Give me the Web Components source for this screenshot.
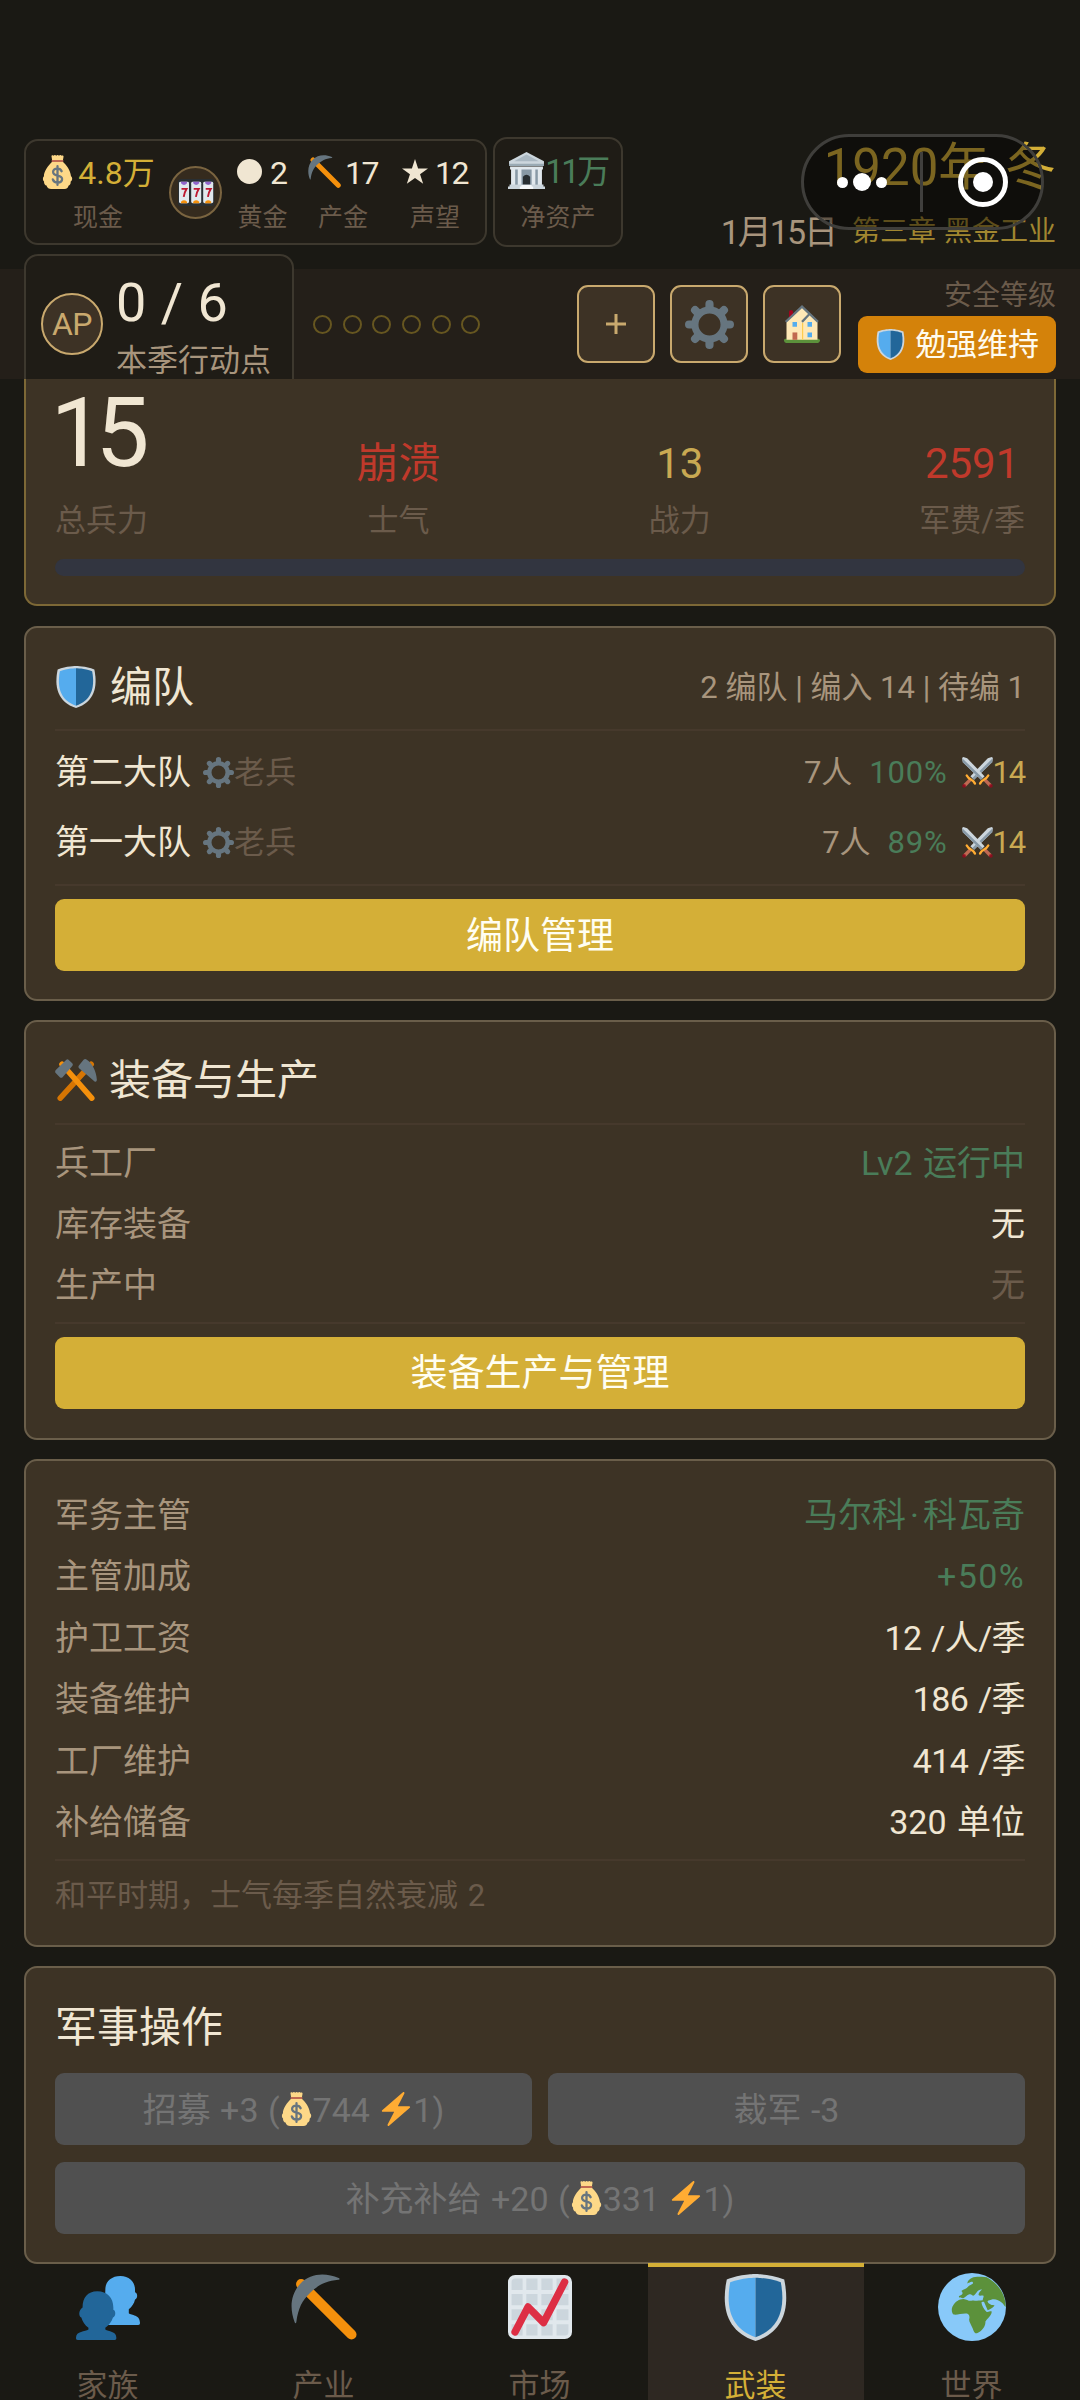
<!DOCTYPE html>
<html lang="zh-CN">
<head>
<meta charset="utf-8">
<title>军务</title>
<style>
html,body{margin:0;padding:0;background:#1a1914}
body{width:1080px;height:2400px;overflow:hidden;font-family:Roboto,"Noto Sans CJK SC",sans-serif;font-weight:400;word-spacing:2px;color:#f0e6d2;
--dim:#6b5b4b;--mid:#a8957d;--gold:#d4af37;--brass:#c9a96e;--green:#4a7c59;--red:#c0392b;--cream:#f0e6d2}
</style>
</head>
<body>
<game-app></game-app>
<script>
const REEL=`<rect x="1" y="7" width="10" height="22" rx="1.500" fill="#E1E8ED"/><path fill="#9266CC" d="M3 7h6v1.500q-3 3.500-6 0z"/><path fill="#F4900C" d="M3 29v-1.500q3-3 6 0V29z"/><path d="M3.500 14.300h5Q6.200 18 5.700 22.500" fill="none" stroke="#BE1931" stroke-width="1.900"/>`;
const SWORD=`<path fill="#CCD6DD" d="M34.500 0L36 1.200 35 6 14 26.500 9.800 22.300 30 1.500z"/><path fill="#8899A6" d="M36 1.200L35 6 14 26.500 12 24.300z"/><path d="M3 33L10 26" stroke="#BF6952" stroke-width="4"/><path d="M5.500 21.500q2 3.500 4.800 4.600 3.500 1.600 4.700 4.700" fill="none" stroke="#FFAC33" stroke-width="2.800" stroke-linecap="round"/><circle cx="2.500" cy="33.500" r="2.200" fill="#A0041E" fill-opacity=".75"/>`;
const ICONS={
shield:`<path fill="#CCD6DD" d="M33 3c-7-3-15-3-15-3S10 0 3 3C0 18 3 31 18 36c15-5 18-18 15-33z"/><path fill="#55ACEE" d="M18 34C6.4 29.7 2 19.8 4.8 4.4 11 2 17.900 2 18 2z"/><path fill="#269" d="M31.200 4.400C24.900 2 18 2 18 2v32C29.600 29.700 34 19.800 31.200 4.400z"/>`,
gear:`<g stroke="#66757F" fill="none"><circle cx="18" cy="18" r="10.700" stroke-width="5.200"/><g stroke-width="6" stroke-linecap="round"><path d="M18 3v3M18 30v3M3 18h3M30 18h3M7.400 7.400l2 2M26.600 26.600l2 2M28.600 7.400l-2 2M9.400 26.600l-2 2"/></g></g>`,
bolt:`<path fill="#FFAC33" d="M32.938 15.651C32.792 15.260 32.418 15 32 15H19.925L26.890 1.458c.219-.426.106-.947-.271-1.243C26.437.071 26.218 0 26 0c-.233 0-.466.082-.653.243L18 6.588 3.347 19.243c-.316.273-.430.714-.284 1.105S3.582 21 4 21h12.075L9.110 34.542c-.219.426-.106.947.271 1.243.182.144.401.215.619.215.233 0 .466-.082.653-.243L18 29.412l14.653-12.655c.317-.273.430-.714.285-1.106z"/>`,
bag:`<path fill="#FDD888" d="M12.500 7C8 11 3 17.500 3.200 22.500 1.500 24 1.800 27 3.300 28 3 30.500 4.500 32 6 32.300 6.500 35 9 36 11 36h14.500c3 0 4-1.700 4.500-3.400 2-.800 2.600-2.600 2.300-4.300 2.200-1.500 2.400-4 .400-6C32.200 16.500 28 11 23.500 7z"/><path fill="#FDD888" d="M11.500 1.600C11 .300 12.500 0 13.600.700c1-.900 2.200-.900 3 0 1-.900 2.200-.900 3 0 1-.900 2.300-.800 2.900.100 1.300-.700 2.500.100 2 1.500L23.800 6H12.200z"/><rect x="11.500" y="5.200" width="13" height="2.200" rx="1" fill="#BF6952"/><path d="M22.500 17.200c-.700-2-2.500-2.800-4.600-2.800-2.800 0-4.700 1.400-4.700 3.700 0 5.300 9.800 2.400 9.800 7.400 0 2.300-2.200 3.700-4.900 3.700-2.800 0-4.600-1.300-5.200-3.300M18 11.800v19.800" fill="none" stroke="#67757F" stroke-width="2.500" stroke-linecap="round"/>`,
pick:`<path d="M5.500 5.500L33 33" stroke="#F4900C" stroke-width="5.500" stroke-linecap="round"/><path fill="#66757F" d="M26 2.200C19-.800 10.500-.600 5.200 5.200-.400 11-.800 19 2 26.300c.300.800.800.700.900-.100C4 18.500 6 14.500 10.500 10.200 14.800 6 19 4 25.800 3.200c.900-.100 1-.600.200-1z"/>`,
people:`<path fill="#55ACEE" d="M16.500 8C16.500 3.500 20 .500 25 .500S33.200 3.800 33.200 8v1.500c1.600.300 1.600 3.500 0 4C32.800 15.500 31.500 17.500 29.700 19v2.200c1.500 1.400 6.300.500 6.300 5.300 0 1-.300 1.200-1 1.200H16z"/><path fill="#269" d="M3.700 18C3.700 12.500 6.500 9 12 9s9 3.500 9 9v1.200c1.600.500 1.400 3.900-.200 4.300-.800 2.200-2 4.200-4.300 5.700v1c1.700 1.300 6.200.700 6.200 4.600 0 1-.2 1.200-1 1.200H1c-.8 0-1-.3-1-1.200 0-3.900 5.200-3.300 7-4.600v-1c-2-1.400-3.300-3.500-4-5.700-1.500-.400-1.800-3.800.7-5.500z"/>`,
chart:`<rect width="36" height="36" rx="4" fill="#E1E8ED"/><g fill="#CCD6DD"><path d="M2 4q0-2 2-2h4.200v6.500H2zM10.300 2h6.300v6.500h-6.300zM18.800 2h6.300v6.500h-6.300zM27.300 2H32q2 0 2 2v4.500h-6.700zM2 10.700h6.200v6.300H2zM10.300 10.700h6.300v6.300h-6.300zM18.800 10.700h6.300v6.300h-6.300zM27.300 10.700H34v6.300h-6.700zM2 19.200h6.200v6.300H2zM10.300 19.200h6.300v6.300h-6.300zM18.800 19.200h6.300v6.300h-6.300zM27.300 19.200H34v6.300h-6.700zM2 27.700h6.200V34H4q-2 0-2-2zM10.300 27.700h6.300V34h-6.300zM18.800 27.700h6.300V34h-6.300zM27.300 27.700H34V32q0 2-2 2h-4.700z"/></g><path d="M4 32L11.300 18 20 26.800 31.800 4" fill="none" stroke="#DD2E44" stroke-width="4.200" stroke-linecap="round" stroke-linejoin="round"/>`,
globe:`<circle cx="18" cy="18" r="18" fill="#88C9F9"/><path fill="#5C913B" d="M15.500 5.500c.300-2 2.500-3.600 5.500-3.500 1.500 0 3.300-.300 4.800.300C32 5.500 36 11.800 35.800 18c-.800-.600-1.200-1.700-2.100-2.400-1.300-1.300-3.400-2-4.800-1.700-1 .6-2.200.3-2.700 1.100.3 1.500 2.500 2.300 3.700 2-.3 1.300-2 2.100-3.600 2.700l-1.900-4.400c-.7-.2-1.300-.1-1.400.3.2 1.700 1.400 3.800 2.800 5 1 .2 2.100-.6 2.600-.2.200 2-2.400 3.600-3.300 5.300.3 3.300-3 5.800-4.500 6.200-1.500.4-1.800-1.800-2.600-3.300-.5-1.500-1.700-2.700-1.500-4.200.5-1.700-.2-2.600-1.200-2.900-2.300-.3-5 .8-7 .5-1-.7-1.500-3-.3-4.800 1-2 3.200-3.500 5.500-3.500 2 .1 2.700 1.500 4.700.9 2 .2 3.500-.1 5.500-.2 0-1 .6-1.500.4-2.400-.9-.3-2 .3-2.600-.3-.2-1 .8-2 1.800-2.900-.8-.4-2 .3-2.500 1-1 1.200-1.700 2.700-2.700 2-1-1-1.800-.3-2.600 0-1 .7-1.700 1.900-2.700 1.400-1 0-2.200-.2-1.600-1 .8-.5 1.500-.5 1.800-1.400 0-1-.7-.8-.5-1.400 1-.9 2.700-1 3.500-2.300.9-.8 1.700-.700 2.500-1.500.3-1-.8-1.200-2-.5-1 0-.9-.5.500-.4z"/>`,
house:`<path fill="#5C913B" d="M36 33.500c0 1.400-1 2.500-2.500 2.500h-31C1 36 0 35 0 33.500S1 32 2.500 32h31c1.500 0 2.500.5 2.500 1.500z"/><path fill="#A0041E" d="M5 6c0-1.500 4-1.500 4 0v7H5z"/><path fill="#FFE8B6" d="M18 1L2.500 15V33h31V15z"/><path fill="#FFCC4D" d="M18 17h1.200v16H18z"/><path d="M1.700 16L18 1.500 34 16M18 16l7-7" fill="none" stroke="#66757F" stroke-width="2.200"/><path fill="#C1694F" d="M8.500 26h4.800v7H8.500z"/><path fill="#55ACEE" d="M8.500 16h4.500v4.500H8.500zM23.500 16H28v4.500h-4.500zM23.500 26H28v4.500h-4.500z"/>`,
slots:`<rect y="4" width="36" height="28" rx="3" fill="#292F33"/>${REEL}<g transform="translate(12.200 0)">${REEL}</g><g transform="translate(24.200 0)">${REEL}</g>`,
bank:`<path fill="#CCD6DD" d="M18 0L1 9v3.500h34V9z"/><path fill="#AAB8C2" d="M18 2.500L6 9h24z"/><path fill="#9AAAB4" d="M1 11.500h34v2H1z"/><path fill="#8899A6" d="M3.500 15h29v17h-29z"/><path fill="#292F33" d="M14.500 32v-8q3.500-3.500 7 0v8z"/><path fill="#E1E8ED" d="M3 14h4v18H3zM9.500 14h3.600v18H9.500zM23 14h3.600v18H23zM29 14h4v18h-4zM2 14h32v3H2z"/><path fill="#CCD6DD" d="M1.500 31.500h33V34h-33zM0 33.500h36V36H0z"/><path fill="#F5F8FA" d="M13 32h10v1.500h1.500V36h-13v-2.500H13z"/>`,
swords:`${SWORD}<g transform="matrix(-1 0 0 1 36 0)">${SWORD}</g>`,
tools:`<path d="M31 4.500L4.500 33.500" stroke="#D67503" stroke-width="4.800" stroke-linecap="round"/><path fill="#66757F" d="M20.500 5.500L24.500.7q1.300-1.300 2.800 0C32 4 35.500 10.500 35.900 18q-.3 2-2 1.200C29.500 15.500 25 11.500 20.600 8q-1-1.200-.1-2.500z"/><path d="M6 4.500L31.500 33.500" stroke="#F4900C" stroke-width="4.800" stroke-linecap="round"/><path fill="#66757F" d="M.7 9.500L9.500.8q1.200-1 2.300 0l3 2.800q1 1.200 0 2.400L6.500 15.600q-1.200 1.100-2.400 0L.6 12q-1-1.200.1-2.500z"/>`,
disc:`<circle cx="18" cy="18" r="18" fill="#f0e6d2"/>`,
star:`<path fill="#f0e6d2" d="M18 0l4.300 13.500H36L25 21.800 29.300 35.500 18 27.200 6.700 35.500 11 21.800 0 13.500h13.700z"/>`
};
// Registers an element whose shadow root is filled from an HTML builder.
function define(name,css,build){
  customElements.define(name,class extends HTMLElement{
    constructor(){
      super();
      const t=document.createElement('template');
      t.innerHTML=`<style>*{box-sizing:border-box}${css}</style>${build(k=>this.getAttribute(k)||'')}`;
      this.attachShadow({mode:'open'}).append(t.content.cloneNode(true));
    }
  });
}
define('g-icon',`:host{display:inline-block;flex:none}svg{display:block}`,
  a=>`<svg width="${a('w')}" height="${a('h')||a('w')}" viewBox="0 0 36 36" preserveAspectRatio="none">${ICONS[a('name')]}</svg>`);
define('res-item',`:host{display:flex;flex-direction:column;align-items:center;flex:none;white-space:nowrap}
.v{display:flex;align-items:center;height:44px;line-height:44px;font-size:32px;padding-top:3px}::slotted(g-icon){margin-bottom:2px}.l{font-size:25px;line-height:36px;margin-top:7px;color:var(--dim)}`,
  a=>`<div class="v"><slot></slot></div><div class="l"><slot name="label"></slot></div>`);
define('stat-box',`:host{display:flex;border:2px solid #3d382e;border-radius:14px;background:#1f1c16;flex:none}`,()=>`<slot></slot>`);
define('slot-button',`:host{display:flex;align-items:center;justify-content:center;flex:none;width:53px;height:53px;border:2px solid #7a6440;border-radius:50%;background:#352b1e}`,
  ()=>`<g-icon name="slots" w="36" h="35"></g-icon>`);
define('date-block',`:host{display:flex;flex-direction:column;align-items:flex-end;margin-left:auto;padding-top:7px;gap:12px;white-space:nowrap}
.y{font-size:51px;line-height:60px;color:var(--gold);word-spacing:3px}
.r{display:flex;gap:16px;line-height:44px}.d{font-size:34px;color:var(--mid);letter-spacing:-2px}.c{font-size:28px;color:#a18630;word-spacing:1px}`,
  ()=>`<div class="y">1920年 冬</div><div class="r"><span class="d">1月15日</span><span class="c">第三章 黑金工业</span></div>`);
define('mini-capsule',`:host{position:absolute;left:801px;top:134px;width:243px;height:96px;display:flex;align-items:center;border:3px solid #3f3e3b;border-radius:48px;background:rgba(0,0,0,.42);background-clip:padding-box}
.half{flex:1;display:flex;align-items:center;justify-content:center;gap:5px}.half:first-child{padding-right:5px}.half:last-child{padding-left:2px}i{display:block;background:#fff;border-radius:50%;width:11px;height:11px}
.b{width:18px;height:18px}.s{width:3px;height:60px;background:#403f3d;flex:none}
.ring{width:50px;height:50px;border:5px solid #fff;border-radius:50%;display:flex;align-items:center;justify-content:center}.ring i{width:20px;height:20px}`,
  ()=>`<div class="half"><i></i><i class="b"></i><i></i></div><div class="s"></div><div class="half"><div class="ring"><i></i></div></div>`);
define('ap-box',`:host{display:flex;align-items:center;width:270px;height:140px;padding-left:15px;gap:13px;border:2px solid #3d382e;border-radius:14px;background:#1f1c16;flex:none;white-space:nowrap}
.c{width:62px;height:62px;border:2px solid var(--brass);border-radius:50%;background:#3d3225;color:var(--brass);font-size:32px;line-height:59px;text-align:center;letter-spacing:-.5px}
.t{display:flex;flex-direction:column;padding-top:8px;gap:6px}.n{font-size:54px;line-height:60px;word-spacing:1px}.l{font-size:31px;line-height:44px;color:var(--mid)}`,
  ()=>`<div class="c">AP</div><div class="t"><div class="n">0 / 6</div><div class="l">本季行动点</div></div>`);
define('ap-dots',`:host{display:flex;gap:10.700px;margin-left:19px}i{width:19px;height:19px;border:2px solid #665620;border-radius:50%}`,
  ()=>'<i></i>'.repeat(6));
define('tool-button',`:host{display:flex;align-items:center;justify-content:center;width:78px;height:78px;border:2px solid var(--brass);border-radius:11px;background:#3d3225;flex:none}`,()=>`<slot></slot>`);
define('safety-level',`:host{display:flex;flex-direction:column;align-items:flex-end;width:198px;padding-bottom:3px;white-space:nowrap}
.l{font-size:28px;line-height:47px;height:44px;color:var(--dim)}
.b{display:flex;align-items:center;gap:9px;width:198px;height:57px;padding-left:17px;border-radius:9px;background:#d4820a;color:#fffbee;font-size:31px}.b span{line-height:42px;padding-top:1px}`,
  ()=>`<div class="l">安全等级</div><div class="b"><g-icon name="shield" w="31" h="31"></g-icon><span>勉强维持</span></div>`);
define('game-header',`:host{display:block;position:relative;height:379px;overflow:hidden;padding:137px 24px 0 24px;box-sizing:border-box;background:linear-gradient(#1a1914 269px,#241f19 269px)}
.a{display:flex;align-items:center;height:110px}.b{display:flex;align-items:center;height:140px;margin-top:7px}
.one{width:463px;height:106px;padding:8px 0 0 15px}.one slot-button{margin:17px 0 0 14px}
.two{width:130px;height:110px;margin-left:6px;padding:9px 0 0;justify-content:center}
.tools{display:flex;gap:15px;margin-left:auto;margin-right:17px}
svg{display:block}`,
  ()=>`<div class="a">
  <stat-box class="one">
   <res-item style="width:114px;color:var(--gold)"><g-icon name="bag" w="33" h="34" style="margin-right:4px"></g-icon>4.8万<span slot="label">现金</span></res-item>
   <slot-button></slot-button>
   <res-item style="width:51px;margin-left:15px"><g-icon name="disc" w="25" style="margin-right:8px"></g-icon>2<span slot="label">黄金</span></res-item>
   <res-item style="width:68px;margin-left:21px"><g-icon name="pick" w="33" style="margin-right:4px"></g-icon><span style="letter-spacing:-1.500px">17</span><span slot="label">产金</span></res-item>
   <res-item style="width:66px;margin-left:25px"><g-icon name="star" w="26" h="25" style="margin-right:7px"></g-icon><span style="letter-spacing:-1.500px">12</span><span slot="label">声望</span></res-item>
  </stat-box>
  <stat-box class="two"><res-item style="color:var(--green)"><g-icon name="bank" w="37" style="margin-right:0"></g-icon><span style="font-size:33px;letter-spacing:-2.500px">11万</span><span slot="label" style="padding-top:1px;display:block">净资产</span></res-item></stat-box>
  <date-block></date-block></div>
 <div class="b"><ap-box></ap-box><ap-dots></ap-dots>
  <div class="tools"><tool-button><svg width="20" height="20"><path d="M10 0v20M0 10h20" stroke="#c9a96e" stroke-width="3"/></svg></tool-button>
  <tool-button><g-icon name="gear" w="49"></g-icon></tool-button><tool-button><g-icon name="house" w="36" h="38"></g-icon></tool-button></div>
  <safety-level></safety-level></div>
 <mini-capsule></mini-capsule>`);
define('force-stat',`:host{display:flex;flex-direction:column;align-items:center;white-space:nowrap}.v{font-size:42px;line-height:58px}.l{margin-top:6px;font-size:31px;line-height:44px;color:var(--dim)}`,
  ()=>`<div class="v"><slot></slot></div><div class="l"><slot name="label"></slot></div>`);
define('force-card',`:host{display:block;box-sizing:border-box;height:227px;padding:0 29px;border:2px solid #7d6836;border-top:0;border-radius:0 0 13px 13px;background:#3d3325}
.r{display:flex;justify-content:space-between;align-items:flex-end;height:164px}.bar{height:17px;margin-top:16px;border-radius:9px;background:#323540}
.big{display:block;font-size:96px;line-height:88px;margin:0 6px 16px -6px;letter-spacing:-9px}`,
  ()=>`<div class="r"><force-stat><span class="big">15</span><span slot="label">总兵力</span></force-stat>
  <force-stat style="color:var(--red)">崩溃<span slot="label">士气</span></force-stat>
  <force-stat style="color:#c9a952">13<span slot="label">战力</span></force-stat>
  <force-stat style="color:var(--red)">2591<span slot="label">军费/季</span></force-stat></div><div class="bar"></div>`);
define('panel-card',`:host{display:block;box-sizing:border-box;margin-top:19px;padding:29px 29px 0;border:2px solid #6a5e4a;border-radius:13px;background:#3d3325}`,()=>`<slot></slot>`);
define('card-title',`:host{display:flex;align-items:center;box-sizing:border-box;height:56px;padding-top:6px;line-height:50px;font-size:42px;white-space:nowrap}.n{margin-left:auto;font-size:31px;color:var(--mid);word-spacing:0}g-icon{margin-right:12px}`,
  a=>`${a('icon')?`<g-icon name="${a('icon')}" w="${a('w')||42}" h="42" style="margin-top:-3px;margin-left:${a('w')?-1:0}px"></g-icon>`:''}<slot></slot><span class="n"><slot name="note"></slot></span>`);
define('rule-line',`:host{display:block;height:2px;background:#46392c}`,()=>'');
define('kv-row',`:host{display:flex;justify-content:space-between;height:61.400px;line-height:66px;font-size:34px;white-space:nowrap}.k{color:var(--mid)}`,
  a=>`<span class="k">${a('k')}</span><span style="${a('css')}"><slot></slot></span>`);
define('squad-row',`:host{display:flex;align-items:center;box-sizing:border-box;height:70px;padding-top:5px;line-height:65px;font-size:31px;white-space:nowrap}
.n{font-size:34px;margin-right:12px}.r{color:var(--dim);margin-right:auto}.p{color:var(--mid)}.h{color:var(--green);margin:0 14px 0 17px;letter-spacing:.8px}.f{color:#c9a952;letter-spacing:-1.200px}`,
  a=>`<span class="n">${a('name')}</span><g-icon name="gear" w="31" style="margin-top:-1px"></g-icon><span class="r">老兵</span>
  <span class="p">7人</span><span class="h">${a('hp')}</span><g-icon name="swords" w="31" style="margin-top:-1px"></g-icon><span class="f">14</span>`);
define('action-button',`:host{display:flex;align-items:center;justify-content:center;box-sizing:border-box;height:72px;padding-top:3px;border-radius:9px;background:#d4af37;color:#fffef2;font-size:37px;line-height:60px;white-space:pre}
:host([disabled]){background:#505050;color:#747474;font-size:34px;word-spacing:1px;padding-top:2px}::slotted(g-icon){margin-bottom:3px}`,()=>`<slot></slot>`);
define('nav-tab',`:host{display:flex;flex-direction:column;align-items:center;flex:1;padding-right:1px;color:var(--dim);font-size:31px;line-height:28px}
:host([active]){margin-top:-1px;border-top:4px solid var(--gold);background:#2e2822;color:var(--gold)}
.i{display:flex;align-items:center;height:68px;margin:9px 0 31px}:host([active]) .i{margin:6px 0 31px}`,
  a=>`<div class="i"><g-icon name="${a('icon')}" w="${a('w')}" h="${a('h')}"></g-icon></div><span><slot></slot></span>`);
define('tab-bar',`:host{display:flex;height:136px}`,()=>`<slot></slot>`);
define('game-app',`:host{display:block}main{padding:0 24px;height:1885px}.g{display:flex;gap:16px;margin-bottom:17px}.g action-button{flex:1}.dot{margin:0 4px}.t{letter-spacing:-.6px}`,
  ()=>`<game-header></game-header><main>
 <force-card></force-card>
 <panel-card style="height:375px;margin-top:20px"><card-title icon="shield" w="44" style="margin-bottom:16px">编队<span slot="note">2 编队 | 编入 14 | 待编 1</span></card-title><rule-line></rule-line>
  <div style="padding:4px 0 9px"><squad-row name="第二大队" hp="100%"></squad-row><squad-row name="第一大队" hp="89%"></squad-row></div><rule-line></rule-line>
  <action-button style="margin-top:13px">编队管理</action-button></panel-card>
 <panel-card style="height:420px;"><card-title icon="tools" style="height:54px;margin-bottom:18px">装备与生产</card-title><rule-line></rule-line>
  <div style="padding:4.500px 0 8.300px"><kv-row k="兵工厂" css="color:var(--green)">Lv2 运行中</kv-row><kv-row k="库存装备">无</kv-row><kv-row k="生产中" css="color:var(--dim)">无</kv-row></div><rule-line></rule-line>
  <action-button style="margin-top:13px">装备生产与管理</action-button></panel-card>
 <panel-card style="height:488px;padding-top:21px"><kv-row k="军务主管" css="color:var(--green)">马尔科<span class="dot">·</span>科瓦奇</kv-row><kv-row k="主管加成" css="color:var(--green);letter-spacing:1.400px">+50%</kv-row><kv-row k="护卫工资"><span class="t">12 /人/季</span></kv-row><kv-row k="装备维护"><span class="t">186 /季</span></kv-row><kv-row k="工厂维护"><span class="t">414 /季</span></kv-row><kv-row k="补给储备">320 单位</kv-row>
  <rule-line style="margin-top:9px"></rule-line><div style="margin-top:12px;font-size:31px;line-height:46px;color:var(--dim)">和平时期，士气每季自然衰减 2</div></panel-card>
 <panel-card style="height:298px"><card-title style="margin-bottom:20px">军事操作</card-title>
  <div class="g"><action-button disabled>招募 +3 (<g-icon name="bag" w="33" h="34"></g-icon>744 <g-icon name="bolt" w="34"></g-icon>1)</action-button><action-button disabled>裁军 -3</action-button></div>
  <action-button disabled>补充补给 +20 (<g-icon name="bag" w="33" h="34"></g-icon>331 <g-icon name="bolt" w="34"></g-icon>1)</action-button></panel-card>
 </main>
 <tab-bar><nav-tab icon="people" w="64" h="65">家族</nav-tab><nav-tab icon="pick" w="66" h="66">产业</nav-tab><nav-tab icon="chart" w="64" h="64">市场</nav-tab><nav-tab icon="shield" w="69" h="67" active>武装</nav-tab><nav-tab icon="globe" w="68" h="68">世界</nav-tab></tab-bar>`);
</script>
</body>
</html>
